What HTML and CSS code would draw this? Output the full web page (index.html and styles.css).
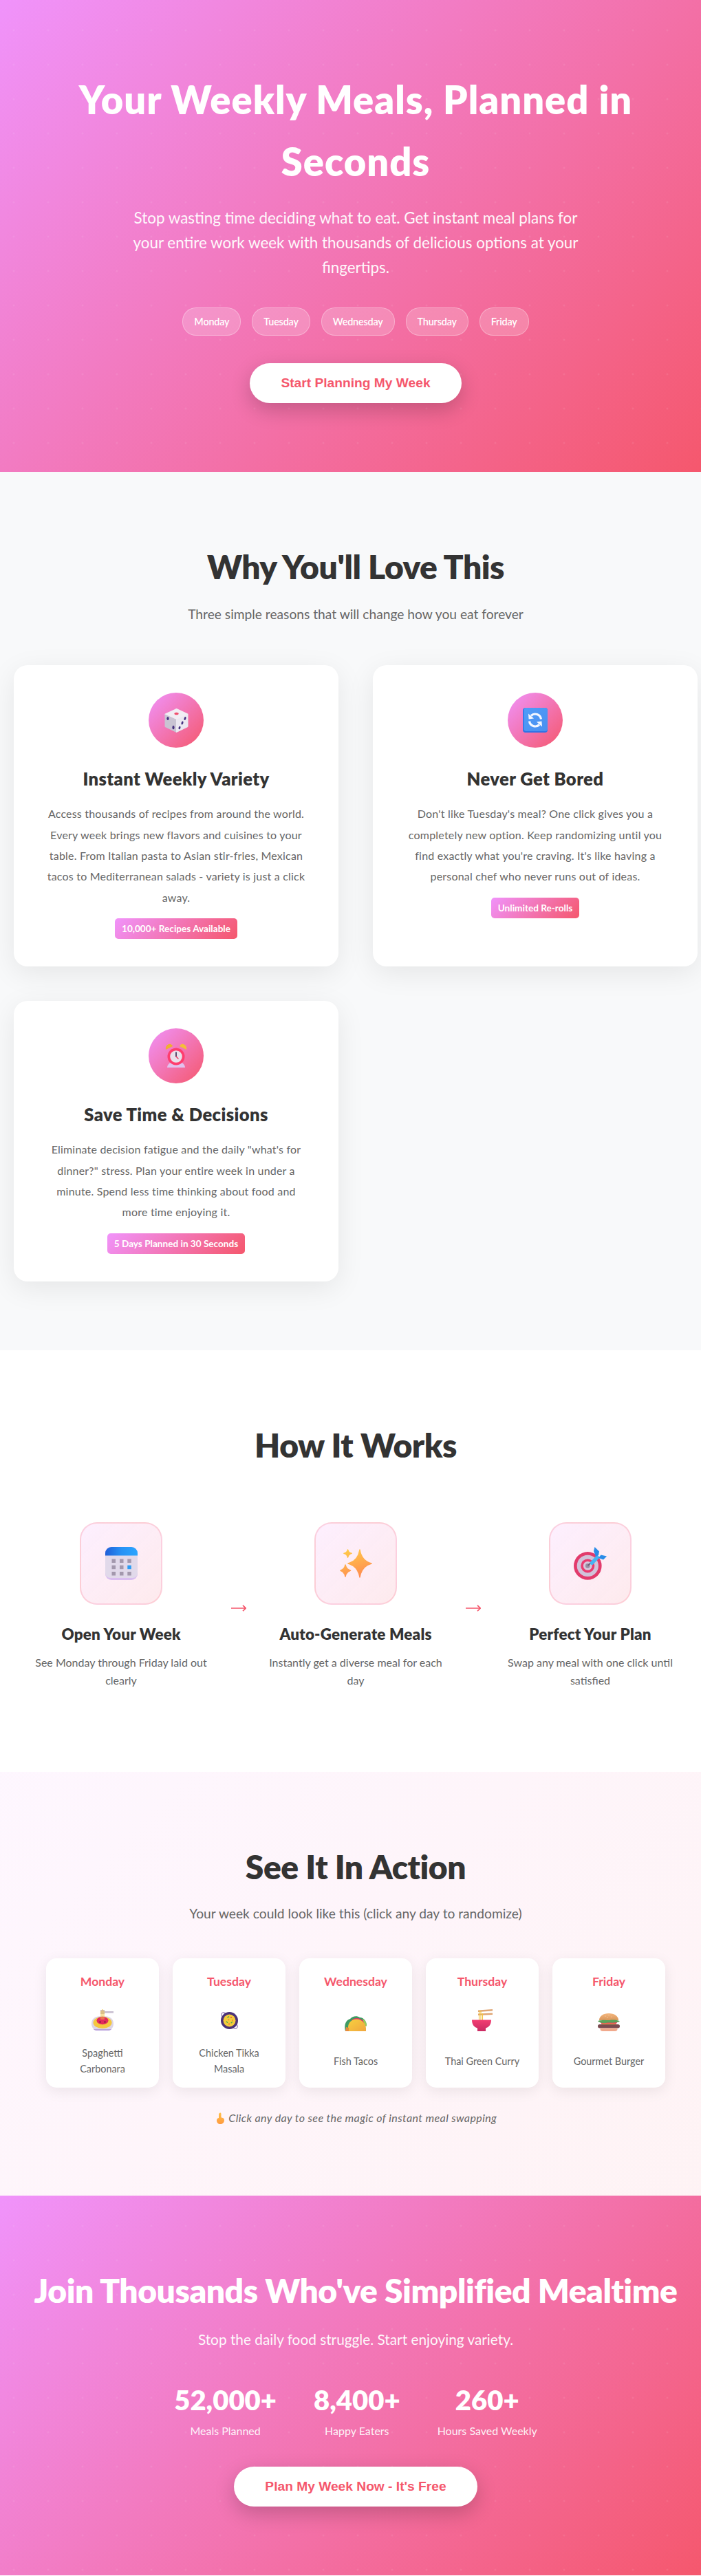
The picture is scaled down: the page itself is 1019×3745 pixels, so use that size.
FILE: index.html
```html
<!DOCTYPE html>
<html lang="en">
<head>
<meta charset="utf-8">
<title>Weekly Meals</title>
<link rel="stylesheet" href="styles.css">
</head>
<body>
<svg class="defs" width="0" height="0" aria-hidden="true">
  <defs>
    <linearGradient id="gBlue" x1="0" y1="0" x2="1" y2="0"><stop offset="0" stop-color="#1f5fd8"/><stop offset="0.5" stop-color="#2792f5"/><stop offset="1" stop-color="#2ba6ff"/></linearGradient>
    <linearGradient id="gRepeat" x1="0" y1="0" x2="1" y2="1"><stop offset="0" stop-color="#4f9cf8"/><stop offset="1" stop-color="#4a90f0"/></linearGradient>
    <linearGradient id="gStar" gradientUnits="userSpaceOnUse" x1="16" y1="0" x2="30" y2="42"><stop offset="0" stop-color="#ffc94a"/><stop offset="1" stop-color="#ff8a50"/></linearGradient>
    <linearGradient id="gBowl" x1="0" y1="0" x2="0" y2="1"><stop offset="0" stop-color="#f23d72"/><stop offset="1" stop-color="#c92a62"/></linearGradient>
    <linearGradient id="gBun" x1="0" y1="0" x2="0" y2="1"><stop offset="0" stop-color="#f4b77e"/><stop offset="1" stop-color="#d9965a"/></linearGradient>
    <linearGradient id="gShell" x1="0" y1="0" x2="1" y2="1"><stop offset="0" stop-color="#f7d13f"/><stop offset="1" stop-color="#f0a63f"/></linearGradient>
    <linearGradient id="gHand" x1="0" y1="0" x2="0" y2="1"><stop offset="0" stop-color="#ffc04a"/><stop offset="1" stop-color="#ff9a3f"/></linearGradient>
  </defs>
</svg>
<div class="page">
  <header class="hero">
    <h1>Your Weekly Meals, Planned in Seconds</h1>
    <p class="hero-text">Stop wasting time deciding what to eat. Get instant meal plans for your entire work week with thousands of delicious options at your fingertips.</p>
    <div class="pills">
      <span class="pill">Monday</span>
      <span class="pill">Tuesday</span>
      <span class="pill">Wednesday</span>
      <span class="pill">Thursday</span>
      <span class="pill">Friday</span>
    </div>
    <button class="btn btn-start" type="button">Start Planning My Week</button>
  </header>

  <section class="why">
    <h2 class="title">Why You'll Love This</h2>
    <p class="sub">Three simple reasons that will change how you eat forever</p>
    <div class="features">
      <article class="feature">
        <div class="feature-icon">
          <svg class="ico-35" viewBox="0 0 35 35"><path d="M17.5 1 33.5 8.5 17.5 16 1.500 8.5Z" fill="#f1edf4" stroke="#f1edf4" stroke-width="2" stroke-linejoin="round"/><path d="M1 9 17.5 16.5V34.5L1 26.5Z" fill="#c9c3d2" stroke="#c9c3d2" stroke-linejoin="round"/><path d="M34 9 17.5 16.5V34.5L34 26.5Z" fill="#ece8f1" stroke="#ece8f1" stroke-linejoin="round"/><ellipse cx="17.5" cy="7.500" rx="3.200" ry="1.800" fill="#f0506e"/><ellipse cx="5" cy="14.500" rx="1.600" ry="2.600" fill="#45307f"/><ellipse cx="13" cy="27.500" rx="1.600" ry="2.800" fill="#45307f"/><ellipse cx="30" cy="14.500" rx="1.400" ry="2.600" fill="#45307f" transform="rotate(18 30 14.5)"/><ellipse cx="26" cy="21" rx="1.400" ry="2.600" fill="#45307f" transform="rotate(18 26 21)"/><ellipse cx="22" cy="28" rx="1.400" ry="2.400" fill="#45307f" transform="rotate(18 22 28)"/></svg>
        </div>
        <h3>Instant Weekly Variety</h3>
        <p>Access thousands of recipes from around the world. Every week brings new flavors and cuisines to your table. From Italian pasta to Asian stir-fries, Mexican tacos to Mediterranean salads - variety is just a click away.</p>
        <span class="badge">10,000+ Recipes Available</span>
      </article>
      <article class="feature">
        <div class="feature-icon">
          <svg class="ico-36" viewBox="0 0 36 36"><rect width="36" height="36" rx="4" fill="#2f74e6"/><rect x="1.500" y="0" width="34.500" height="34" rx="3.500" fill="url(#gRepeat)"/><path d="M26.500 16.500A8.600 8.600 0 0 0 12 11.500" fill="none" stroke="#f3f7ff" stroke-width="3.200"/><path d="M8 8.500 8.600 16.500 16 15.500Z" fill="#f3f7ff"/><path d="M9.500 19.500A8.600 8.600 0 0 0 24 24.500" fill="none" stroke="#f3f7ff" stroke-width="3.200"/><path d="M28 27.500 27.400 19.500 20 20.500Z" fill="#f3f7ff"/></svg>
        </div>
        <h3>Never Get Bored</h3>
        <p>Don't like Tuesday's meal? One click gives you a completely new option. Keep randomizing until you find exactly what you're craving. It's like having a personal chef who never runs out of ideas.</p>
        <span class="badge">Unlimited Re-rolls</span>
      </article>
      <article class="feature">
        <div class="feature-icon">
          <svg class="ico-32x36" viewBox="0 0 32 36"><path d="M1 9C0 4 4 0 8 1 10 2 11 3 11 4Z" fill="#eeb02f"/><path d="M31 9C32 4 28 0 24 1 22 2 21 3 21 4Z" fill="#f4bd3a"/><path d="M9 27C5 29 3 32 3 35H29C29 32 27 29 23 27Z" fill="#e2c2ee"/><circle cx="16" cy="19" r="12.500" fill="#ff3d6e"/><circle cx="16" cy="19" r="8.800" fill="#e9e0ea"/><path d="M16 13V19" stroke="#33264f" stroke-width="1.600" stroke-linecap="round"/><path d="M16 19 19 22" stroke="#f0325f" stroke-width="1.400" stroke-linecap="round"/></svg>
        </div>
        <h3>Save Time &amp; Decisions</h3>
        <p>Eliminate decision fatigue and the daily "what's for dinner?" stress. Plan your entire week in under a minute. Spend less time thinking about food and <span class="nowrap">more time</span> enjoying it.</p>
        <span class="badge">5 Days Planned in 30 Seconds</span>
      </article>
    </div>
  </section>

  <section class="how">
    <h2 class="title">How It Works</h2>
    <div class="steps">
      <div class="step">
        <div class="step-icon">
          <svg class="ico-47x48" viewBox="0 0 47 48"><rect width="47" height="48" rx="9" fill="#d9bdf0"/><path d="M0 13V9A9 9 0 0 1 9 0H38A9 9 0 0 1 47 9V13Z" fill="url(#gBlue)"/><path d="M0 12.500H47V38A7 7 0 0 1 40 45H7A7 7 0 0 1 0 38Z" fill="#e1d9ea"/><g fill="#a398ad"><rect x="9.500" y="17.500" width="5.500" height="5.500"/><rect x="21" y="17.500" width="5.500" height="5.500"/><rect x="32.300" y="17.500" width="5.500" height="5.500"/><rect x="9.500" y="26.700" width="5.500" height="5.500"/><rect x="21" y="26.700" width="5.500" height="5.500"/><rect x="9.500" y="36" width="5.500" height="5.500"/><rect x="21" y="36" width="5.500" height="5.500"/><rect x="32.300" y="36" width="5.500" height="5.500"/></g><rect x="32.300" y="26.700" width="5.500" height="5.500" fill="#2a9cf5"/></svg>
        </div>
        <h3>Open Your Week</h3>
        <p>See Monday through Friday laid out clearly</p>
      </div>
      <svg class="arrow" viewBox="0 0 22 10"><path d="M0 5H21M17 .8 21.300 5 17 9.200" fill="none" stroke="#f5576c" stroke-width="1.700"/></svg>
      <div class="step">
        <div class="step-icon">
          <svg class="ico-47x42" viewBox="0 0 47 42"><g fill="url(#gStar)" stroke="url(#gStar)" stroke-linejoin="round" stroke-width="1.500"><path d="M29 1Q31.500 17 46 21 31.500 25 29 41 26.500 25 12 21 26.500 17 29 1Z"/><path d="M11.500 1Q12.500 5.500 17 6.300 12.500 7.300 11.500 12 10.500 7.300 6 6.300 10.500 5.500 11.500 1Z"/><path d="M8 23Q9.200 29.500 15.500 31.300 9.200 33.300 8 40 6.800 33.300 1 31.300 6.800 29.500 8 23Z"/></g></svg>
        </div>
        <h3>Auto-Generate Meals</h3>
        <p>Instantly get a diverse meal for each day</p>
      </div>
      <svg class="arrow" viewBox="0 0 22 10"><path d="M0 5H21M17 .8 21.300 5 17 9.200" fill="none" stroke="#f5576c" stroke-width="1.700"/></svg>
      <div class="step">
        <div class="step-icon">
          <svg class="ico-48" viewBox="0 0 48 48"><circle cx="20.300" cy="27.400" r="20.300" fill="#e23a6c"/><circle cx="20.300" cy="27.400" r="15.600" fill="#d1c2da"/><circle cx="20.300" cy="27.400" r="10" fill="#ea3a70"/><circle cx="20.300" cy="27.400" r="6.400" fill="#d6c8dc"/><circle cx="20.300" cy="27.400" r="3.300" fill="#9a8ca2"/><path d="M20.500 27 25 23" stroke="#6d6078" stroke-width="2"/><path d="M23.500 22.500 34 11.500 38 15 27.500 26Q24 26.500 23.500 22.500Z" fill="#46b4f4"/><path d="M32 14 29 6 30.500 0 37 6.500 36 12Z" fill="#2a8ce8"/><path d="M36 16 43 18.500 48 13.500 39.500 11.500Z" fill="#2a8ce8"/></svg>
        </div>
        <h3>Perfect Your Plan</h3>
        <p>Swap any meal with one click until satisfied</p>
      </div>
    </div>
  </section>

  <section class="demo">
    <h2 class="title">See It In Action</h2>
    <p class="sub">Your week could look like this (click any day to randomize)</p>
    <div class="days">
      <div class="day">
        <div class="day-name">Monday</div>
        <div class="day-emoji"><svg class="emo-32" viewBox="0 0 32 32"><path d="M0 21C0 13 6 10 16 10S32 13 32 21C32 27 28 31 24 31H8C4 31 0 27 0 21Z" fill="#ddd6e6"/><path d="M3 29H29C28 30.500 26 31 24 31H8C6 31 4 30.500 3 29Z" fill="#b9a0dc"/><ellipse cx="16" cy="19.500" rx="13.500" ry="8.500" fill="#f4c73f"/><ellipse cx="16" cy="16.500" rx="8.500" ry="5.800" fill="#e2285c"/><circle cx="12.500" cy="18.500" r="1.300" fill="#8e1c44"/><circle cx="19.500" cy="18.500" r="1.300" fill="#8e1c44"/><path d="M13 1H19V7H13Z" fill="#c6bdcf"/><path d="M19 3H32V5.500H19Z" fill="#c6bdcf"/><path d="M14 2V15M16 0V15M18 2V15" stroke="#f2c23f" stroke-width="1"/></svg></div>
        <div class="day-meal">Spaghetti Carbonara</div>
      </div>
      <div class="day">
        <div class="day-name">Tuesday</div>
        <div class="day-emoji"><svg class="emo-27" viewBox="0 0 27 27"><circle cx="5" cy="5" r="3.300" fill="none" stroke="#7a5aa6" stroke-width="1"/><circle cx="22" cy="22" r="3.300" fill="none" stroke="#7a5aa6" stroke-width="1"/><circle cx="13.500" cy="13.500" r="12.500" fill="#4b3278"/><circle cx="13.500" cy="13.500" r="9" fill="#f4cb3c"/><g fill="#4ea84e"><rect x="10" y="8" width="3" height="1.300" transform="rotate(-30 11 8)"/><rect x="9" y="15" width="3" height="1.300" transform="rotate(40 10 15)"/><rect x="15" y="16" width="3" height="1.300" transform="rotate(-40 16 16)"/></g><g fill="#e8503f"><circle cx="16" cy="9" r="1"/><circle cx="12.500" cy="12.500" r=".8"/><circle cx="18" cy="13" r=".8"/><circle cx="13" cy="18.500" r=".9"/></g></svg></div>
        <div class="day-meal">Chicken Tikka Masala</div>
      </div>
      <div class="day">
        <div class="day-name">Wednesday</div>
        <div class="day-emoji"><svg class="emo-32x22" viewBox="0 0 32 22"><path d="M1 22C-1 14 1 6 8 4 11 0 18 -1 22 2 28 2 32 8 32 14Z" fill="#3f9b63"/><path d="M26 4C30 6 32 10 32 15L28 12Z" fill="#9ccb55"/><path d="M10 6C14 2 22 2 27 7L29 14H12Z" fill="#e5326a"/><path d="M5 22V16C5 9 11 4.500 17.500 4.500 25 4.500 31 11 31 18V22Z" fill="url(#gShell)"/><path d="M1 22H6V17L2 16Z" fill="#e88a3c"/></svg></div>
        <div class="day-meal">Fish Tacos</div>
      </div>
      <div class="day">
        <div class="day-name">Thursday</div>
        <div class="day-emoji"><svg class="emo-30x32" viewBox="0 0 30 32"><path d="M9 1.500 30 0V2.500L9 4Z" fill="#dfa574"/><path d="M9 6.500 30 5.500V8L9 9Z" fill="#dfa574"/><path d="M10.500 2V17M13 2V17M15.500 6V17" stroke="#f3c33e" stroke-width="1.100"/><path d="M0 15.500H28C28 22 25 26 20 27.500V32H8V27.500C3 26 0 22 0 15.500Z" fill="url(#gBowl)"/></svg></div>
        <div class="day-meal">Thai Green Curry</div>
      </div>
      <div class="day">
        <div class="day-name">Friday</div>
        <div class="day-emoji"><svg class="emo-32x26" viewBox="0 0 32 26"><path d="M2 10C2 4 8 0 16 0S30 4 30 10Z" fill="url(#gBun)"/><g fill="#fbe6cb"><circle cx="11" cy="4" r=".5"/><circle cx="16" cy="2.500" r=".5"/><circle cx="20" cy="5" r=".5"/><circle cx="14" cy="6.500" r=".5"/></g><path d="M3 12H29L26 16H6Z" fill="#e83c5c"/><path d="M0 11.500C2 9.500 4 10.500 6 10 10 9 14 10.500 17 10 22 9 28 9.500 32 11.500 30 13.500 27 13 24 13.500 20 14 16 13 12 14 8 14.500 3 14 0 11.500Z" fill="#5aa35a"/><path d="M5 15H27L24 17H8Z" fill="#f4c73f"/><rect y="16" width="32" height="5.500" rx="2.750" fill="#7a4a4f"/><path d="M3.500 21.500H28.500V23C28.500 25 27 26 25 26H7C5 26 3.500 25 3.500 23Z" fill="#f0a98c"/></svg></div>
        <div class="day-meal">Gourmet Burger</div>
      </div>
    </div>
    <p class="hint"><svg class="hand" viewBox="0 0 16 17"><path d="M7 1C7.800 0 9.500 .5 9.500 2V7.500C11.500 7.500 14 8.500 14 11 14 14.500 12 17 8.500 17 5 17 3 15 3 11.500 3 10 3.800 8.500 6 8V2.500C6 2 6.500 1.500 7 1Z" fill="url(#gHand)"/></svg> <em>Click any day to see the magic of instant meal swapping</em></p>
  </section>

  <section class="cta">
    <h2 class="cta-title">Join Thousands Who've Simplified Mealtime</h2>
    <p class="cta-text">Stop the daily food struggle. Start enjoying variety.</p>
    <div class="stats">
      <div class="stat"><div class="stat-num">52,000+</div><div class="stat-label">Meals Planned</div></div>
      <div class="stat"><div class="stat-num">8,400+</div><div class="stat-label">Happy Eaters</div></div>
      <div class="stat"><div class="stat-num">260+</div><div class="stat-label">Hours Saved Weekly</div></div>
    </div>
    <button class="btn btn-plan" type="button">Plan My Week Now - It's Free</button>
  </section>
</div>
</body>
</html>
```

FILE: styles.css
```css
* { box-sizing: border-box; margin: 0; padding: 0; }
html, body { overflow-x: hidden; }
body { font-family: Lato, "Open Sans", sans-serif; line-height: 1.6; color: #333; background: #fff; }
.defs { position: absolute; }
.page { width: 1034px; }
.nowrap { white-space: nowrap; }

.hero, .cta {
  text-align: center;
  color: #fff;
  padding: 100px 20px;
  background:
    radial-gradient(circle at 20px 44px, rgba(255,255,255,.08) 1.2px, transparent 1.8px) 0 0 / 50px 50px,
    linear-gradient(135deg, #f093fb 0%, #f5576c 100%);
}
.hero h1 { font-size: 56px; font-weight: 800; max-width: 900px; margin: 0 auto 20px; letter-spacing: 1px; }
.hero-text { font-size: 22.4px; max-width: 670px; margin: 0 auto 40px; opacity: .95; }
.pills { display: flex; justify-content: center; gap: 16px; margin-bottom: 40px; }
.pill { font-size: 14.4px; font-weight: 600; padding: 8px 16px; border: 1px solid rgba(255,255,255,.3); border-radius: 20px; background: rgba(255,255,255,.2); letter-spacing: -.2px; }
.btn { display: block; margin: 0 auto; font-family: "Liberation Sans", Arial, sans-serif; font-weight: 700; color: #f5576c; background: #fff; border: 0; border-radius: 50px; height: 58px; box-shadow: 0 10px 30px rgba(0,0,0,.2); font-size: 19.2px; }
.btn-start { width: 308px; }
.btn-plan { width: 354px; }

.why, .how, .demo { padding: 100px 20px; text-align: center; }
.why { background: #f8f9fa; }
.title { font-size: 48px; font-weight: 800; color: #333; margin-bottom: 15px; letter-spacing: -0.01em; }
.sub { font-size: 19.2px; color: #666; }
.features { display: grid; grid-template-columns: 472px 472px; gap: 50px; margin-top: 59px; }
.feature { background: #fff; border-radius: 20px; padding: 40px; box-shadow: 0 10px 40px rgba(0,0,0,.08); }
.feature-icon { width: 80px; height: 80px; margin: 0 auto 25px; border-radius: 50%; display: flex; align-items: center; justify-content: center; background: linear-gradient(135deg, #f093fb, #f5576c); }
.ico-35 { width: 35px; height: 35px; }
.ico-36 { width: 36px; height: 36px; }
.ico-32x36 { width: 32px; height: 36px; }
.feature h3 { font-size: 25.6px; font-weight: 800; color: #333; margin-bottom: 15px; letter-spacing: .4px; }
.feature p { font-size: 16px; line-height: 1.9; color: #666; margin-bottom: 15px; letter-spacing: .2px; }
.badge { display: block; width: fit-content; margin: 0 auto; font-size: 13.6px; font-weight: 700; line-height: 22px; color: #fff; padding: 4px 10px; border-radius: 5px; background: linear-gradient(135deg, #f093fb, #f5576c); }

.steps { display: flex; justify-content: center; align-items: center; gap: 20px; margin-top: 54px; }
.step { width: 277px; padding: 20px 10px; }
.step-icon { width: 120px; height: 120px; margin: 0 auto 25px; border-radius: 25px; border: 2px solid rgba(245,87,108,.2); display: flex; align-items: center; justify-content: center; background: linear-gradient(135deg, rgba(240,147,251,.15), rgba(245,87,108,.12)); }
.ico-47x48 { width: 47px; height: 48px; }
.ico-47x42 { width: 47px; height: 42px; }
.ico-48 { width: 48px; height: 48px; }
.arrow { width: 22px; height: 10px; flex: none; margin: 8px 1px 0; }
.step h3 { font-size: 22.4px; font-weight: 800; color: #333; margin-bottom: 10px; letter-spacing: .2px; }
.step p { font-size: 16px; color: #666; }

.demo { background: linear-gradient(135deg, rgba(240,147,251,.08), rgba(245,87,108,.07)); }
.days { display: grid; grid-template-columns: repeat(5, 1fr); gap: 20px; max-width: 900px; margin: 49px auto 0; }
.day { background: #fff; border-radius: 15px; padding: 20px 20px 16px; box-shadow: 0 5px 20px rgba(0,0,0,.08); }
.day-name { font-size: 17.6px; font-weight: 700; color: #f5576c; margin-bottom: 26px; }
.day-emoji { height: 32px; display: flex; align-items: flex-end; justify-content: center; margin-bottom: 20px; }
.day-meal { font-size: 14.4px; color: #666; height: 46px; display: flex; align-items: center; justify-content: center; }
.emo-32 { width: 32px; height: 32px; }
.emo-27 { width: 27px; height: 27px; margin-bottom: 2px; }
.emo-32x22 { width: 32px; height: 22px; }
.emo-30x32 { width: 30px; height: 32px; }
.emo-32x26 { width: 32px; height: 26px; }
.hint { margin-top: 31px; font-size: 16px; color: #666; letter-spacing: .4px; }
.hand { width: 16px; height: 17px; vertical-align: -3px; }

.cta-title { font-size: 48px; font-weight: 800; margin-bottom: 15px; white-space: nowrap; letter-spacing: -0.01em; }
.cta-text { font-size: 20.8px; opacity: .95; margin-bottom: 40px; }
.stats { display: flex; justify-content: center; gap: 54px; margin-bottom: 40px; }
.stat-num { font-size: 40px; font-weight: 800; }
.stat-label { font-size: 16px; opacity: .9; }
```
